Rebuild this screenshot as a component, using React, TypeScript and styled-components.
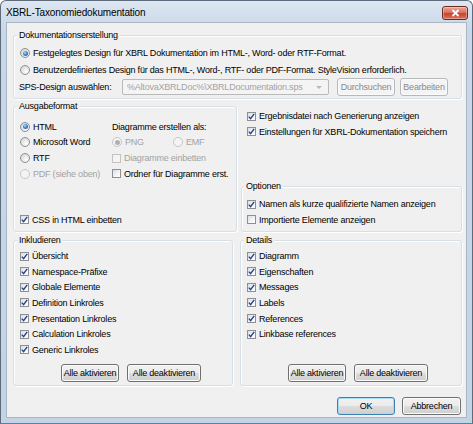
import React from "react";
import styled, { createGlobalStyle } from "styled-components";

const FONT = `"Liberation Sans", Arial, sans-serif`;

const Global = createGlobalStyle`
  html, body { margin: 0; padding: 0; background: #ffffff; }
  body { font-family: ${FONT}; }
  *, *::before, *::after { box-sizing: border-box; }
`;

const Window = styled.div`
  width: 473px;
  height: 424px;
  display: flex;
  flex-direction: column;
  border: 1px solid #5d6b7c;
  border-bottom-color: #3f8ea6;
  border-radius: 6px 6px 0 0;
  background: linear-gradient(#dde7f2, #c9d7e7 28px, #c5d4e5);
  overflow: hidden;
`;

const TitleBar = styled.div`
  height: 21px;
  flex: none;
  display: flex;
  align-items: center;
  justify-content: space-between;
  padding: 2px 4px 0 5px;
`;

const Title = styled.span`
  font: 10px ${FONT};
  color: #000;
  letter-spacing: -0.15px;
`;

const CloseButton = styled.div`
  width: 26px;
  height: 14px;
  border: 1px solid #6b2a20;
  border-radius: 3px;
  background: linear-gradient(#eaa99a, #d9735f 45%, #c7452c 55%, #d8735c);
  box-shadow: inset 0 0 0 1px rgba(255, 255, 255, 0.35);
  display: grid;
  place-items: center;
`;

const Client = styled.div`
  flex: 1;
  margin: 0 5px 5px;
  background: #f0f0f0;
  border: 1px solid #a9b6c5;
  display: flex;
  flex-direction: column;
  padding: 12px 4px 0 6px;
  font: 9px ${FONT};
  letter-spacing: -0.22px;
  color: #000;
`;

const Group = styled.div<{ $h: number; $pl?: number }>`
  height: ${(p) => p.$h}px;
  border: 1px solid #d5dfe5;
  border-radius: 3px;
  box-shadow: inset 1px 1px 0 #ffffff, 1px 1px 0 #ffffff;
  display: flex;
  flex-direction: column;
  padding: 0 6px 0 ${(p) => p.$pl ?? 6}px;
  min-width: 0;
`;

const GroupTitle = styled.div`
  align-self: flex-start;
  margin: -7px 0 0 -3px;
  padding: 0 2px;
  height: 12px;
  line-height: 12px;
  background: #f0f0f0;
`;

const Stack = styled.div<{ $pt: number }>`
  display: flex;
  flex-direction: column;
  padding-top: ${(p) => p.$pt}px;
`;

const Option = styled.div<{ $disabled?: boolean; $h?: number; $w?: number }>`
  display: flex;
  align-items: center;
  gap: 3px;
  height: ${(p) => p.$h ?? 15.65}px;
  ${(p) => (p.$w ? `width: ${p.$w}px;` : "")}
  flex: none;
  white-space: nowrap;
  color: ${(p) => (p.$disabled ? "#a3a3a3" : "#000")};
`;

const BoxMark = styled.span<{ $disabled?: boolean }>`
  width: 9px;
  height: 9px;
  flex: none;
  border: 1px solid ${(p) => (p.$disabled ? "#c2c2c2" : "#8e8f8f")};
  background: ${(p) =>
    p.$disabled
      ? "#f4f4f4"
      : "linear-gradient(135deg, #d9dde3 0%, #f3f5f8 60%, #ffffff 100%)"};
  display: grid;
  place-items: center;
`;

const RadioMark = styled.span<{ $checked?: boolean; $disabled?: boolean }>`
  width: 10px;
  height: 10px;
  flex: none;
  border-radius: 50%;
  border: 1px solid ${(p) => (p.$disabled ? "#c6c6c6" : "#8e8f8f")};
  background: ${(p) =>
    p.$disabled
      ? "#f4f4f4"
      : "radial-gradient(circle at 65% 70%, #ffffff 0%, #e8e8e8 45%, #cfcfcf 100%)"};
  display: grid;
  place-items: center;
  &::after {
    content: "";
    display: ${(p) => (p.$checked ? "block" : "none")};
    width: 5px;
    height: 5px;
    border-radius: 50%;
    background: ${(p) =>
      p.$disabled
        ? "#b0b0b0"
        : "radial-gradient(circle at 40% 35%, #a8dcff 0%, #3b8ad8 45%, #174f9c 100%)"};
  }
`;

const Check = ({ disabled }: { disabled?: boolean }) => (
  <svg width="7" height="7" viewBox="0 0 7 7">
    <path
      d="M0.8 3.6 L2.6 5.6 L6.2 0.9"
      fill="none"
      stroke={disabled ? "#a0a0a0" : "#23418a"}
      strokeWidth="1.4"
    />
  </svg>
);

const CheckBox = ({
  label,
  checked,
  disabled,
  h,
}: {
  label: string;
  checked?: boolean;
  disabled?: boolean;
  h?: number;
}) => (
  <Option $disabled={disabled} $h={h}>
    <BoxMark $disabled={disabled}>{checked && <Check disabled={disabled} />}</BoxMark>
    <span>{label}</span>
  </Option>
);

const RadioButton = ({
  label,
  checked,
  disabled,
  h,
  w,
}: {
  label: string;
  checked?: boolean;
  disabled?: boolean;
  h?: number;
  w?: number;
}) => (
  <Option $disabled={disabled} $h={h} $w={w}>
    <RadioMark $checked={checked} $disabled={disabled} />
    <span>{label}</span>
  </Option>
);

const SpsRow = styled.div`
  display: flex;
  align-items: center;
  height: 17px;
`;

const SpsLabel = styled.span`
  width: 103px;
  margin-left: -1px;
  flex: none;
  white-space: nowrap;
`;

const Combo = styled.div`
  width: 207px;
  height: 16px;
  border: 1px solid #b9b9b9;
  border-radius: 2px;
  background: #f4f4f4;
  color: #a3a3a3;
  display: flex;
  align-items: center;
  justify-content: space-between;
  padding: 0 6px 0 4px;
  white-space: nowrap;
  overflow: hidden;
`;

const ComboArrow = styled.span`
  width: 0;
  height: 0;
  border-left: 3px solid transparent;
  border-right: 3px solid transparent;
  border-top: 3px solid #b8b8b8;
`;

const Button = styled.button<{ $w: number; $default?: boolean }>`
  width: ${(p) => p.$w}px;
  height: 18px;
  flex: none;
  padding: 0;
  font: inherit;
  letter-spacing: inherit;
  color: #000;
  border: 1px solid ${(p) => (p.$default ? "#3c7fb1" : "#707070")};
  border-radius: 3px;
  background: linear-gradient(#f2f2f2 0%, #ebebeb 50%, #dddddd 51%, #cfcfcf 100%);
  box-shadow: inset 0 0 0 1px ${(p) => (p.$default ? "#a6dcf6" : "#fbfbfb")};
  white-space: nowrap;
  &:disabled {
    color: #8a8a8a;
    border-color: #b5b9bc;
    background: #f4f4f4;
    box-shadow: inset 0 0 0 1px #fbfbfb;
  }
`;

const ButtonRow = styled.div<{ $ml?: number; $mt?: number; $gap: number; $end?: boolean }>`
  display: flex;
  gap: ${(p) => p.$gap}px;
  margin-left: ${(p) => p.$ml ?? 0}px;
  margin-top: ${(p) => p.$mt ?? 0}px;
  justify-content: ${(p) => (p.$end ? "flex-end" : "flex-start")};
`;

const TwoCols = styled.div<{ $cols: string; $gap: number; $h: number; $mt: number }>`
  display: grid;
  grid-template-columns: ${(p) => p.$cols};
  column-gap: ${(p) => p.$gap}px;
  height: ${(p) => p.$h}px;
  margin-top: ${(p) => p.$mt}px;
`;

const FormatGrid = styled.div`
  display: grid;
  grid-template-columns: 92px auto;
  grid-auto-rows: 15.65px;
  padding-top: 7px;
`;

const Inline = styled.div`
  display: flex;
  align-items: center;
`;

const Column = styled.div<{ $pl: number }>`
  display: flex;
  flex-direction: column;
  padding-left: ${(p) => p.$pl}px;
  padding-top: 2.5px;
`;

const BottomGroup = styled(Group)`
  margin-top: auto;
  margin-left: -6px;
`;

const BottomOption = styled.div`
  margin-top: auto;
  margin-bottom: 3.5px;
`;

const DialogButtons = styled(ButtonRow)`
  margin-right: 1px;
`;

const includeItems = [
  "Übersicht",
  "Namespace-Präfixe",
  "Globale Elemente",
  "Definition Linkroles",
  "Presentation Linkroles",
  "Calculation Linkroles",
  "Generic Linkroles",
];

const detailItems = [
  "Diagramm",
  "Eigenschaften",
  "Messages",
  "Labels",
  "References",
  "Linkbase references",
];

export default function App() {
  return (
    <>
      <Global />
      <Window>
        <TitleBar>
          <Title>XBRL-Taxonomiedokumentation</Title>
          <CloseButton>
            <svg width="9" height="8" viewBox="0 0 9 8">
              <path d="M1.5 1 L7.5 7 M7.5 1 L1.5 7" stroke="#ffffff" strokeWidth="1.8" />
            </svg>
          </CloseButton>
        </TitleBar>
        <Client>
          <Group $h={64}>
            <GroupTitle>Dokumentationserstellung</GroupTitle>
            <Stack $pt={3.5}>
              <RadioButton
                h={17}
                checked
                label="Festgelegtes Design für XBRL Dokumentation im HTML-, Word- oder RTF-Format."
              />
              <RadioButton
                h={17}
                label="Benutzerdefiniertes Design für das HTML-, Word-, RTF- oder PDF-Format. StyleVision erforderlich."
              />
              <SpsRow>
                <SpsLabel>SPS-Design auswählen:</SpsLabel>
                <Combo>
                  <span>%AltovaXBRLDoc%\XBRLDocumentation.sps</span>
                  <ComboArrow />
                </Combo>
                <ButtonRow $gap={5} $ml={8}>
                  <Button $w={58} disabled>
                    Durchsuchen
                  </Button>
                  <Button $w={48} disabled>
                    Bearbeiten
                  </Button>
                </ButtonRow>
              </SpsRow>
            </Stack>
          </Group>

          <TwoCols $cols="224px 221px" $gap={4} $h={126} $mt={7}>
            <Group $h={126}>
              <GroupTitle>Ausgabeformat</GroupTitle>
              <FormatGrid>
                <RadioButton checked label="HTML" />
                <Option>Diagramme erstellen als:</Option>
                <RadioButton label="Microsoft Word" />
                <Inline>
                  <RadioButton disabled checked label="PNG" w={61} />
                  <RadioButton disabled label="EMF" />
                </Inline>
                <RadioButton label="RTF" />
                <CheckBox disabled label="Diagramme einbetten" />
                <RadioButton disabled label="PDF (siehe oben)" />
                <CheckBox label="Ordner für Diagramme erst." />
              </FormatGrid>
              <BottomOption>
                <CheckBox checked label="CSS in HTML einbetten" />
              </BottomOption>
            </Group>
            <Column $pl={6}>
              <CheckBox checked label="Ergebnisdatei nach Generierung anzeigen" />
              <CheckBox checked label="Einstellungen für XBRL-Dokumentation speichern" />
              <BottomGroup $h={46} $pl={5}>
                <GroupTitle>Optionen</GroupTitle>
                <Stack $pt={4.5}>
                  <CheckBox checked label="Namen als kurze qualifizierte Namen anzeigen" />
                  <CheckBox label="Importierte Elemente anzeigen" />
                </Stack>
              </BottomGroup>
            </Column>
          </TwoCols>

          <TwoCols $cols="220px 222px" $gap={7} $h={146} $mt={8}>
            <Group $h={146}>
              <GroupTitle>Inkludieren</GroupTitle>
              <Stack $pt={2.2}>
                {includeItems.map((t) => (
                  <CheckBox key={t} checked label={t} />
                ))}
              </Stack>
              <ButtonRow $gap={8} $ml={41} $mt={6.2}>
                <Button $w={58}>Alle aktivieren</Button>
                <Button $w={74}>Alle deaktivieren</Button>
              </ButtonRow>
            </Group>
            <Group $h={146}>
              <GroupTitle>Details</GroupTitle>
              <Stack $pt={2.2}>
                {detailItems.map((t) => (
                  <CheckBox key={t} checked label={t} />
                ))}
              </Stack>
              <ButtonRow $gap={8} $ml={41} $mt={21.85}>
                <Button $w={58}>Alle aktivieren</Button>
                <Button $w={74}>Alle deaktivieren</Button>
              </ButtonRow>
            </Group>
          </TwoCols>

          <DialogButtons $gap={7} $mt={11} $end>
            <Button $w={58} $default>
              OK
            </Button>
            <Button $w={59}>Abbrechen</Button>
          </DialogButtons>
        </Client>
      </Window>
    </>
  );
}
